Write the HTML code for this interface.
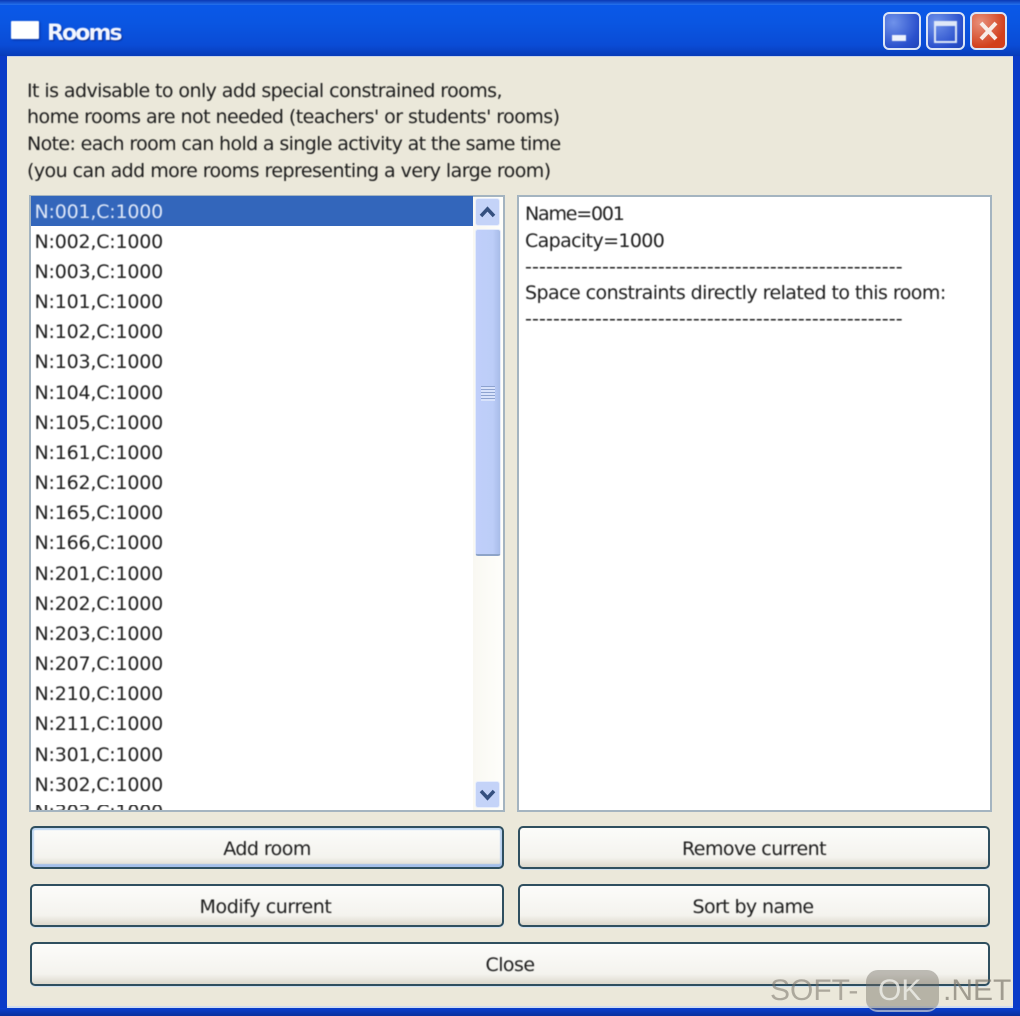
<!DOCTYPE html>
<html><head><meta charset="utf-8"><style>
html,body{margin:0;padding:0}
body{width:1020px;height:1016px;position:relative;overflow:hidden;background:#0a3bc8;font-family:"DejaVu Sans","Liberation Sans",sans-serif;color:#1c1c1c}
div,span{position:absolute;box-sizing:border-box}
.t{white-space:nowrap;font-size:19px;line-height:26px;height:26px;letter-spacing:-.55px;filter:blur(.45px)}
.b{border:2px solid #2f4f5f;border-radius:5px;background:linear-gradient(#fcfcfa,#f4f3ee 75%,#dcd8cc);text-align:center;font-size:19px;letter-spacing:-.55px;color:#1c1c1c;line-height:43px;box-shadow:0 1px 0 #cfe0f0}
.b i{font-style:normal;filter:blur(.45px);display:inline-block}
.l{left:34.5px;font-size:19px;letter-spacing:-.2px}
.w{border:2px solid #dbe5f6;border-radius:6px}
</style></head><body>
<div style="left:0;top:0;width:1020px;height:56px;background:linear-gradient(#0a4ad0 0,#0a58e8 10%,#0a56e2 40%,#0a4cd6 80%,#083cb8)"></div>
<div style="left:0;top:0;width:1020px;height:5px;background:linear-gradient(#0a38b4,#2472ee)"></div>
<div style="left:7px;top:56px;width:1006px;height:952px;background:#ebe8da;border-top:1px solid #c9d3e6;border-bottom:2px solid #cfdcf0"></div>
<div style="left:0;top:1008px;width:1020px;height:8px;background:linear-gradient(#0a3fd0,#0a2f9c)"></div>

<div style="left:11px;top:21px;width:28px;height:18px;background:#fff;border-radius:1px;box-shadow:1px 1px 2px #0a2f9c;filter:blur(.4px)"></div>
<div class="t" style="left:47px;top:19px;height:30px;line-height:30px;font-size:22px;font-weight:bold;color:#f2f6ff;letter-spacing:-1.9px;text-shadow:1px 1px 1px #0a2a8c">Rooms</div>

<div class="w" style="left:883px;top:12px;width:38px;height:38px;background:radial-gradient(circle at 25% 25%,#6f92ea,#2a50cc 70%,#2044b8)"></div>
<div style="left:892px;top:35px;width:14px;height:6px;background:#eef3fc;filter:blur(.4px)"></div>
<div class="w" style="left:926px;top:12px;width:39px;height:38px;background:radial-gradient(circle at 25% 25%,#6f92ea,#2a50cc 70%,#2044b8)"></div>
<div style="left:934px;top:21px;width:23px;height:22px;border:2px solid #dfe8f8;border-top-width:5px;filter:blur(.4px)"></div>
<div class="w" style="left:970px;top:12px;width:37px;height:38px;background:radial-gradient(circle at 25% 25%,#e8907a,#d2401c 70%)"></div>
<svg style="position:absolute;left:970px;top:12px" width="37" height="38"><path d="M11 11L26 27M26 11L11 27" stroke="#f8eee8" stroke-width="4"/></svg>

<div class="t" style="left:27px;top:78px;letter-spacing:-.57px">It is advisable to only add special constrained rooms,</div>
<div class="t" style="left:27px;top:104px">home rooms are not needed (teachers' or students' rooms)</div>
<div class="t" style="left:27px;top:131px;letter-spacing:-.63px">Note: each room can hold a single activity at the same time</div>
<div class="t" style="left:27px;top:157.5px">(you can add more rooms representing a very large room)</div>

<div style="left:29px;top:195px;width:476px;height:617px;background:#fff;border:2px solid #a4b4c0;overflow:hidden"></div>
<div style="left:31px;top:196px;width:442px;height:30px;background:#3366bb"></div>
<div style="left:473px;top:197px;width:30px;height:613px;background:linear-gradient(90deg,#f9f8f2,#fefefb)"></div>
<div style="left:475px;top:198px;width:25px;height:28px;background:#c4d3f8;border:1px solid #e8eefc;border-radius:3px"></div>
<svg style="position:absolute;left:475px;top:198px" width="25" height="28"><path d="M6 18L12.5 11L19 18" fill="none" stroke="#35507f" stroke-width="3.5"/></svg>
<div style="left:475px;top:229px;width:26px;height:327px;background:linear-gradient(90deg,#c0cffa,#bccdf8 70%,#a8bce8);border:1px solid #e4ebfb;border-bottom:2px solid #8ea4c8;border-radius:3px"></div>
<div style="left:481px;top:386px;width:14px;height:15px;background:repeating-linear-gradient(#8ea3d0 0 1px,#d8e2fb 1px 3px)"></div>
<div style="left:475px;top:781px;width:25px;height:27px;background:#c4d3f8;border:1px solid #e8eefc;border-radius:3px"></div>
<svg style="position:absolute;left:475px;top:781px" width="25" height="27"><path d="M6 10L12.5 17L19 10" fill="none" stroke="#35507f" stroke-width="3.5"/></svg>

<div class="t l" style="top:199px;color:#dfe8f8">N:001,C:1000</div>
<div class="t l" style="top:229px">N:002,C:1000</div>
<div class="t l" style="top:259px">N:003,C:1000</div>
<div class="t l" style="top:289px">N:101,C:1000</div>
<div class="t l" style="top:319px">N:102,C:1000</div>
<div class="t l" style="top:349px">N:103,C:1000</div>
<div class="t l" style="top:380px">N:104,C:1000</div>
<div class="t l" style="top:410px">N:105,C:1000</div>
<div class="t l" style="top:440px">N:161,C:1000</div>
<div class="t l" style="top:470px">N:162,C:1000</div>
<div class="t l" style="top:500px">N:165,C:1000</div>
<div class="t l" style="top:530px">N:166,C:1000</div>
<div class="t l" style="top:561px">N:201,C:1000</div>
<div class="t l" style="top:591px">N:202,C:1000</div>
<div class="t l" style="top:621px">N:203,C:1000</div>
<div class="t l" style="top:651px">N:207,C:1000</div>
<div class="t l" style="top:681px">N:210,C:1000</div>
<div class="t l" style="top:711px">N:211,C:1000</div>
<div class="t l" style="top:742px">N:301,C:1000</div>
<div class="t l" style="top:772px">N:302,C:1000</div>
<div style="left:31px;top:805px;width:440px;height:5px;overflow:hidden"><div class="t" style="left:3.5px;top:-6px;font-size:19px;letter-spacing:-.2px">N:303,C:1000</div></div>

<div style="left:517px;top:195px;width:475px;height:617px;background:#fff;border:2px solid #a4b4c0"></div>
<div class="t" style="left:525px;top:201px;letter-spacing:-1.2px">Name=001</div>
<div class="t" style="left:525px;top:228px;letter-spacing:-.62px">Capacity=1000</div>
<div class="t" style="left:525px;top:254px;width:378px;overflow:hidden;letter-spacing:.14px">------------------------------------------------------</div>
<div class="t" style="left:525px;top:280px">Space constraints directly related to this room:</div>
<div class="t" style="left:525px;top:306px;width:378px;overflow:hidden;letter-spacing:.14px">------------------------------------------------------</div>

<div class="b" style="left:30px;top:826px;width:474px;height:43px;box-shadow:inset 0 2px 1px #bcd6f2,inset 0 -3px 1px #a4bfea,inset 2px 0 1px #c4dcf4,inset -2px 0 1px #bcd2f0"><i>Add room</i></div>
<div class="b" style="left:518px;top:826px;width:472px;height:43px"><i>Remove current</i></div>
<div class="b" style="left:30px;top:884px;width:474px;height:43px"><i style="letter-spacing:-.4px;margin-left:-3px">Modify current</i></div>
<div class="b" style="left:518px;top:884px;width:472px;height:43px"><i style="margin-left:-2px;letter-spacing:-.6px">Sort by name</i></div>
<div class="b" style="left:30px;top:942px;width:960px;height:44px"><i>Close</i></div>

<div style="left:866px;top:970px;width:73px;height:42px;background:rgba(110,105,95,.42);border-radius:12px;border-bottom:2px solid rgba(190,200,225,.7)"></div>
<div style="left:770px;top:973px;height:36px;line-height:36px;font-family:'Liberation Sans',sans-serif;font-size:30px;color:rgba(120,115,105,.55);white-space:nowrap">SOFT-</div>
<div style="left:878px;top:973px;height:36px;line-height:36px;font-family:'Liberation Sans',sans-serif;font-size:30px;color:rgba(240,240,235,.8);white-space:nowrap">OK</div>
<div style="left:943px;top:973px;height:36px;line-height:36px;font-family:'Liberation Sans',sans-serif;font-size:30px;color:rgba(120,115,105,.65);white-space:nowrap">.NET</div>
</body></html>
